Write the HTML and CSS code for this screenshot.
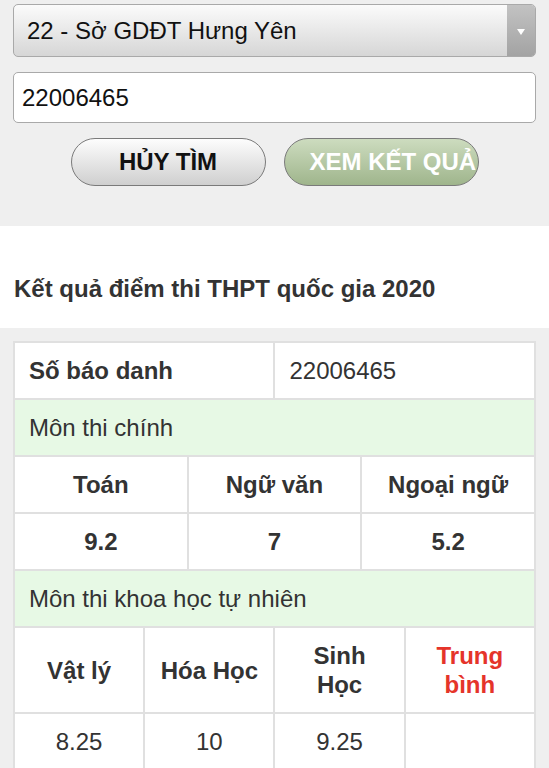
FILE: index.html
```html
<!DOCTYPE html>
<html>
<head>
  <meta charset="utf-8">
  <title>Tra cứu điểm thi THPT 2020</title>
  <link rel="stylesheet" href="styles.css">
</head>
<body>

  <div class="search">
    <div class="select">
      <span class="select-text">22 - Sở GDĐT Hưng Yên</span>
      <span class="select-arrow"></span>
    </div>
    <input class="sbd" type="text" value="22006465">
    <div class="buttons">
      <button class="btn btn-cancel">HỦY TÌM</button>
      <button class="btn btn-view">XEM KẾT QUẢ</button>
    </div>
  </div>

  <h2 class="result-title">Kết quả điểm thi THPT quốc gia 2020</h2>

  <div class="result">
    <table class="scores">
      <colgroup>
        <col><col><col><col><col><col><col><col><col><col><col><col>
      </colgroup>
      <tr>
        <th colspan="6" class="left">Số báo danh</th>
        <td colspan="6" class="left">22006465</td>
      </tr>
      <tr class="group">
        <td colspan="12" class="left">Môn thi chính</td>
      </tr>
      <tr>
        <th colspan="4">Toán</th>
        <th colspan="4">Ngữ văn</th>
        <th colspan="4">Ngoại ngữ</th>
      </tr>
      <tr>
        <th colspan="4">9.2</th>
        <th colspan="4">7</th>
        <th colspan="4">5.2</th>
      </tr>
      <tr class="group">
        <td colspan="12" class="left">Môn thi khoa học tự nhiên</td>
      </tr>
      <tr>
        <th colspan="3">Vật lý</th>
        <th colspan="3">Hóa Học</th>
        <th colspan="3">Sinh<br>Học</th>
        <th colspan="3" class="avg">Trung<br>bình</th>
      </tr>
      <tr>
        <td colspan="3">8.25</td>
        <td colspan="3">10</td>
        <td colspan="3">9.25</td>
        <td colspan="3"></td>
      </tr>
    </table>
  </div>

</body>
</html>
```

FILE: styles.css
```css
body {
  margin: 0;
  font-family: "Liberation Sans", Arial, sans-serif;
  background-color: #efefef;
  color: #333;
}

.search {
  padding: 4px 13px 40px;
}

.select {
  display: flex;
  height: 53px;
  box-sizing: border-box;
  border: 1px solid #a9a9a9;
  border-radius: 5px;
  background: linear-gradient(#fbfbfb, #d6d6d6);
  overflow: hidden;
}
.select-text {
  flex: 1;
  display: flex;
  align-items: center;
  padding-left: 13px;
  font-size: 24px;
  color: #111;
}
.select-arrow {
  width: 28px;
  background: linear-gradient(#c2c2c2, #a3a3a3);
  position: relative;
}
.select-arrow::after {
  content: "";
  position: absolute;
  left: 10px;
  top: 24px;
  border-left: 4px solid transparent;
  border-right: 4px solid transparent;
  border-top: 6px solid #fff;
}

.sbd {
  display: block;
  width: 100%;
  height: 51px;
  box-sizing: border-box;
  margin-top: 15px;
  padding: 0 8px;
  border: 1px solid #a9a9a9;
  border-radius: 5px;
  background: #fff;
  font-family: inherit;
  font-size: 24px;
  color: #111;
}

.buttons {
  display: flex;
  justify-content: center;
  gap: 18px;
  margin-top: 15px;
}
.btn {
  width: 195px;
  height: 48px;
  border: 1px solid #7a7a7a;
  border-radius: 24px;
  font-family: inherit;
  font-size: 24px;
  font-weight: bold;
  white-space: nowrap;
  overflow: hidden;
  padding: 0;
}
.btn-cancel {
  background: linear-gradient(#fdfdfd, #cfcfcf);
  color: #111;
}
.btn-view {
  background: linear-gradient(#cddcbf, #9fb58c);
  color: #fff;
  text-align: left;
  padding-left: 25px;
}

.result-title {
  margin: 0;
  padding: 48px 14px 24px;
  background: #fff;
  font-size: 24px;
  line-height: 30px;
  color: #333;
}

.result {
  padding: 13px 13px 0;
}

.scores {
  width: 100%;
  border-collapse: collapse;
  table-layout: fixed;
  background: #fff;
  font-size: 24px;
}
.scores th, .scores td {
  border: 2px solid #e0e0e0;
  padding: 13px 6px;
  line-height: 29px;
  text-align: center;
}
.scores td {
  font-weight: normal;
}
.scores .left {
  text-align: left;
  padding-left: 14px;
}
.scores .group td {
  background: #e7f9e5;
}
.scores .avg {
  color: #e5342a;
}
```
